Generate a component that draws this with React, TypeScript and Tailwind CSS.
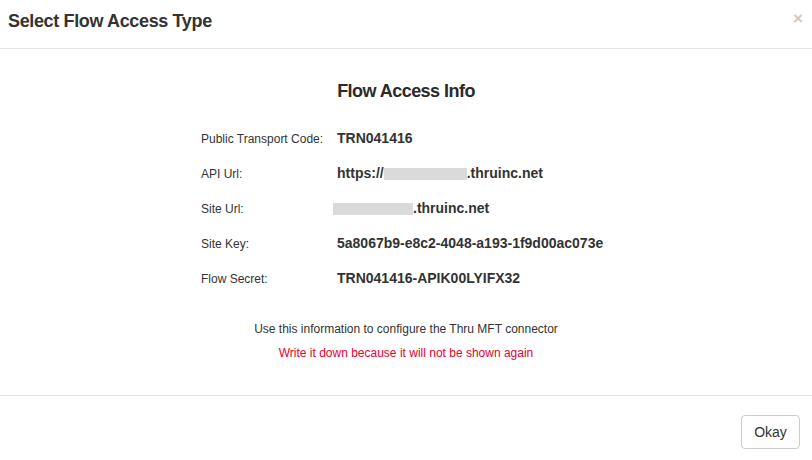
const rows: { label: string; value: React.ReactNode }[] = [
  { label: "Public Transport Code:", value: "TRN041416" },
  {
    label: "API Url:",
    value: (
      <span className="flex items-center">
        https://
        <span className="inline-block h-[12px] w-[83px] bg-[#dadada]" />
        .thruinc.net
      </span>
    ),
  },
  {
    label: "Site Url:",
    value: (
      <span className="-ml-[4px] flex items-center">
        <span className="inline-block h-[12px] w-[80px] bg-[#dadada]" />
        .thruinc.net
      </span>
    ),
  },
  { label: "Site Key:", value: "5a8067b9-e8c2-4048-a193-1f9d00ac073e" },
  { label: "Flow Secret:", value: "TRN041416-APIK00LYIFX32" },
];

function InfoRow({ label, value }: { label: string; value: React.ReactNode }) {
  return (
    <div className="flex h-[35px] items-center">
      <div className="w-[136px] text-[12px]">{label}</div>
      <div className="text-[14px] font-bold">{value}</div>
    </div>
  );
}

export default function App() {
  return (
    <div className="h-[460px] w-[812px] overflow-hidden bg-white text-[#333] font-['Liberation_Sans',Arial,sans-serif]">
      <div className="flex h-[49px] items-start justify-between border-b border-[#e5e5e5] pl-[8px] pr-[9px]">
        <h3 className="mt-[11px] text-[18px] leading-[20px] font-bold tracking-[-0.02em]">
          Select Flow Access Type
        </h3>
        <button className="mt-[9px] text-[17px] leading-[20px] font-bold text-[#c8c8c8]">×</button>
      </div>

      <div className="flex h-[347px] flex-col items-center border-b border-[#e5e5e5] pt-[32px]">
        <h4 className="text-[18px] leading-[20px] font-bold tracking-[-0.03em] text-[#2b2b2b]">
          Flow Access Info
        </h4>
        <div className="mt-[20px] w-[410px]">
          {rows.map((r) => (
            <InfoRow key={r.label} label={r.label} value={r.value} />
          ))}
        </div>
        <p className="mt-[25px] text-[12px] leading-[17px]">
          Use this information to configure the Thru MFT connector
        </p>
        <p className="mt-[7px] text-[12px] leading-[17px] text-[#e8002d]">
          Write it down because it will not be shown again
        </p>
      </div>

      <div className="flex justify-end pt-[19px] pr-[12px]">
        <button className="h-[34px] w-[59px] rounded-[4px] border border-[#ccc] bg-white text-[14px] text-[#333]">
          Okay
        </button>
      </div>
    </div>
  );
}
